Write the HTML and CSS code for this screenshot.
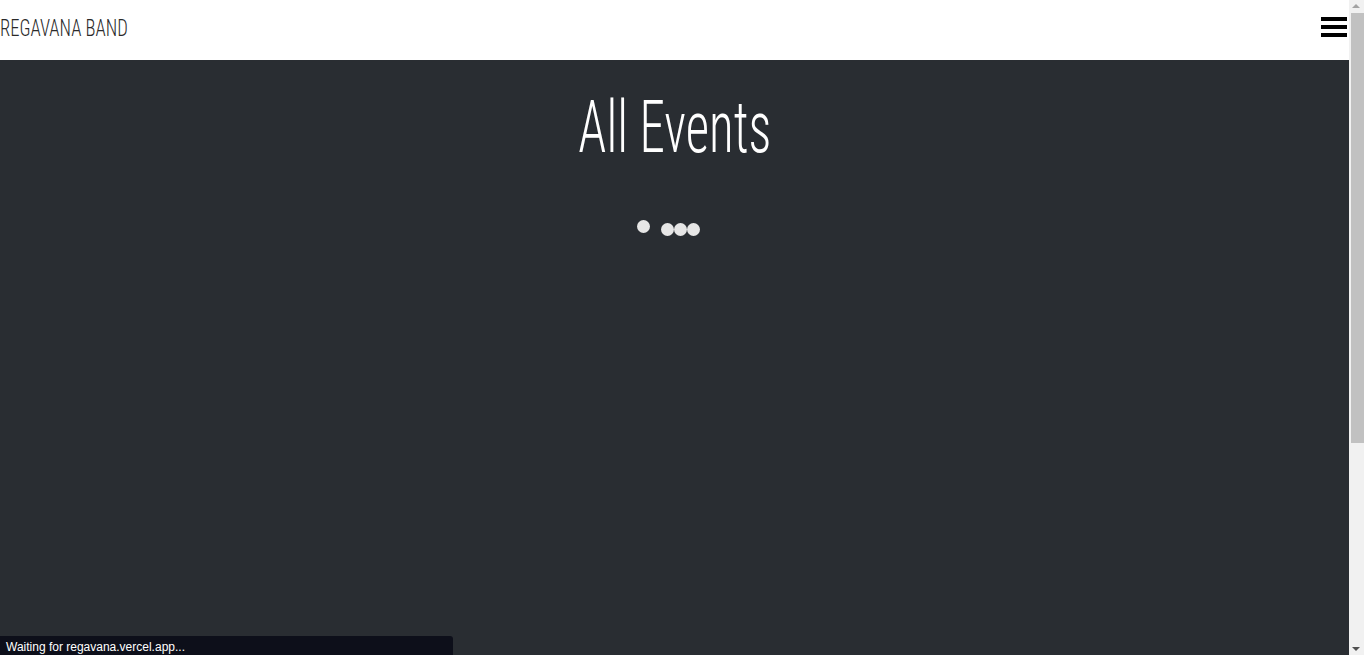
FILE: index.html
```html
<!DOCTYPE html>
<html lang="en">
<head>
<meta charset="utf-8">
<title>Regavana Band - All Events</title>
<link rel="stylesheet" href="styles.css">
</head>
<body>
<div class="app">
  <div class="page">
    <header class="navbar">
      <a class="brand" href="#"><span class="brand-text">REGAVANA BAND</span></a>
      <button class="burger" aria-label="Menu">
        <span class="bar"></span><span class="bar"></span><span class="bar"></span>
      </button>
    </header>
    <main class="events">
      <h1 class="title"><span class="title-text">All Events</span></h1>
      <div class="loader">
        <span class="dot dot-up"></span>
        <span class="dot-group">
          <span class="dot"></span><span class="dot"></span><span class="dot"></span>
        </span>
      </div>
    </main>
  </div>
  <div class="scrollbar">
    <span class="arrow arrow-up"></span>
    <span class="thumb"></span>
    <span class="arrow arrow-down"></span>
  </div>
</div>
<div class="status">Waiting for regavana.vercel.app...</div>
</body>
</html>
```
FILE: styles.css
```css
html, body {
  margin: 0;
  padding: 0;
  height: 100%;
  overflow: hidden;
}
body {
  background: #292d32;
  font-family: "Roboto Condensed", "Roboto", sans-serif;
}
.app {
  display: flex;
  height: 100vh;
}
.page {
  flex: 1;
  display: flex;
  flex-direction: column;
  min-width: 0;
}
.navbar {
  height: 60px;
  background: #fff;
  display: flex;
  align-items: center;
  justify-content: space-between;
  padding: 0 2px 0 0;
  flex: none;
}
.brand {
  text-decoration: none;
  color: #2a2a2a;
  display: flex;
  align-items: center;
}
.brand-text {
  display: inline-block;
  font-family: "Roboto Condensed", sans-serif;
  font-weight: 300;
  font-size: 24px;
  line-height: 24px;
  transform: scaleX(0.775);
  transform-origin: left center;
  margin-top: -4px;
  white-space: nowrap;
}
.burger {
  border: 0;
  background: transparent;
  padding: 0;
  width: 26px;
  display: flex;
  flex-direction: column;
  gap: 4px;
  margin-top: -6px;
  cursor: pointer;
}
.bar {
  display: block;
  height: 4px;
  background: #000;
}
.events {
  flex: 1;
  display: flex;
  flex-direction: column;
  align-items: center;
}
.title {
  margin: 0;
  padding-top: 25px;
  font-weight: 300;
  font-size: 73px;
  line-height: 84px;
  color: #fff;
}
.title-text {
  display: inline-block;
  transform: scaleX(0.7);
  white-space: nowrap;
}
.loader {
  margin-top: 51px;
  display: flex;
  align-items: flex-start;
  gap: 11px;
  margin-left: -12px;
}
.dot {
  display: block;
  width: 13px;
  height: 13px;
  border-radius: 50%;
  background: #e6e6e6;
}
.dot-group {
  display: flex;
  margin-top: 3px;
}
.scrollbar {
  width: 15px;
  flex: none;
  background: #f1f1f1;
  display: flex;
  flex-direction: column;
  align-items: center;
  position: relative;
}
.thumb {
  position: absolute;
  top: 13px;
  left: 2px;
  right: 0;
  height: 430px;
  background: #c1c1c1;
}
.arrow {
  position: absolute;
  left: 3px;
  width: 0;
  height: 0;
  border-left: 4px solid transparent;
  border-right: 4px solid transparent;
}
.arrow-up {
  top: 4px;
  border-bottom: 4px solid #a3a3a3;
}
.arrow-down {
  bottom: 4px;
  border-top: 4px solid #505050;
}
.status {
  position: fixed;
  left: 0;
  bottom: 0;
  width: 447px;
  height: 19px;
  padding-left: 6px;
  background: #0d0f1a;
  border-top-right-radius: 3px;
  color: #fff;
  font-family: "Liberation Sans", "Open Sans", sans-serif;
  font-size: 12px;
  line-height: 22px;
  white-space: nowrap;
}
```
